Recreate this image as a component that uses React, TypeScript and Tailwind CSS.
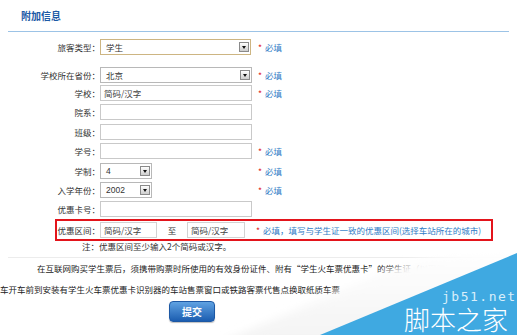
import React from "react";

function Arrow() {
  return (
    <div className="w-[10px] h-[10px] border border-[#8a8a8a] bg-linear-to-b from-white to-[#cdcdcd] flex items-center justify-center shrink-0">
      <div className="w-0 h-0 border-l-[2.5px] border-r-[2.5px] border-t-[3px] border-l-transparent border-r-transparent border-t-[#111]" />
    </div>
  );
}

function Req() {
  return (
    <>
      <span className="ml-[6px] text-[#e02424]">*</span>
      <span className="ml-[3px] text-[#2f7cc6]">必填</span>
    </>
  );
}

function Row({
  label,
  children,
  req,
  mt,
}: {
  label: string;
  children: React.ReactNode;
  req?: boolean;
  mt: string;
}) {
  return (
    <div className={`flex items-center h-[16px] ${mt}`}>
      <div className="w-[100px] text-right whitespace-nowrap">{label}</div>
      <div className="w-[152px] h-[16px] flex">{children}</div>
      {req && <Req />}
    </div>
  );
}

function TextBox({ text }: { text?: string }) {
  return (
    <div className="w-[152px] h-[16px] border border-[#c9c9c9] bg-white flex items-center pl-[3px] text-[#444]">
      {text}
    </div>
  );
}

export default function App() {
  return (
    <div className="relative w-[517px] h-[335px] overflow-hidden bg-white text-[#333] text-[8.5px] leading-[12px] font-['Noto_Sans_CJK_SC','Noto_Sans',sans-serif]">
      <div className="h-[31px] flex items-center pl-[21px] text-[10px] font-bold text-[#1c5aa6]">
        附加信息
      </div>
      <div className="mx-[8px] border-t border-[#9cc3e6]" />

      <Row label="旅客类型：" req mt="mt-[7px]">
        <div className="w-[151px] h-[16px] border border-[#cdb582] bg-white flex items-center justify-between pl-[5px] pr-[1px]">
          <span>学生</span>
          <Arrow />
        </div>
      </Row>
      <Row label="学校所在省份：" req mt="mt-[12px]">
        <div className="w-[152px] h-[16px] border border-[#b8b8b8] bg-white flex items-center justify-between pl-[5px] pr-[1px]">
          <span>北京</span>
          <Arrow />
        </div>
      </Row>
      <Row label="学校：" req mt="mt-[2px]">
        <TextBox text="简码/汉字" />
      </Row>
      <Row label="院系：" mt="mt-[3px]">
        <TextBox />
      </Row>
      <Row label="班级：" mt="mt-[4px]">
        <TextBox />
      </Row>
      <Row label="学号：" req mt="mt-[3px]">
        <TextBox />
      </Row>
      <Row label="学制：" req mt="mt-[4px]">
        <div className="w-[52px] h-[16px] border border-[#b8b8b8] bg-white flex items-center justify-between pl-[5px] pr-[1px]">
          <span className="font-['Liberation_Sans',sans-serif]">4</span>
          <Arrow />
        </div>
      </Row>
      <Row label="入学年份：" req mt="mt-[3px]">
        <div className="w-[52px] h-[16px] border border-[#b8b8b8] bg-white flex items-center justify-between pl-[5px] pr-[1px]">
          <span className="font-['Liberation_Sans',sans-serif]">2002</span>
          <Arrow />
        </div>
      </Row>
      <Row label="优惠卡号：" mt="mt-[3px]">
        <TextBox />
      </Row>

      <div className="ml-[55px] mt-[2px] w-[438px] h-[22px] border-2 border-[#e3141b] flex items-center whitespace-nowrap">
        <div className="w-[43px] text-right">优惠区间：</div>
        <div className="w-[57px] h-[16px] border border-[#d2d2d2] flex items-center pl-[3px] text-[#444]">
          简码/汉字
        </div>
        <div className="w-[30px] text-center">至</div>
        <div className="w-[58px] h-[16px] border border-[#d2d2d2] flex items-center pl-[3px] text-[#444]">
          简码/汉字
        </div>
        <span className="ml-[11px] text-[#e02424]">*</span>
        <span className="ml-[3px] text-[#2f7cc6]">
          必填，填写与学生证一致的优惠区间(选择车站所在的城市)
        </span>
      </div>

      <div className="pl-[82px] h-[10px] leading-[10px] whitespace-nowrap">
        注：优惠区间至少输入2个简码或汉字。
      </div>
      <div className="mx-[8px] mt-[6px] border-t border-[#ececec]" />

      <div className="leading-[21px] whitespace-nowrap text-[#222]">
        <div className="pl-[37px]">
          在互联网购买学生票后，须携带购票时所使用的有效身份证件、附有“学生火车票优惠卡”的学生证（以下简称
        </div>
        <div>
          车开车前到安装有学生火车票优惠卡识别器的车站售票窗口或铁路客票代售点换取纸质车票
        </div>
      </div>

      <div className="ml-[169px] mt-[1px] w-[46px] h-[21px] rounded-[4px] border border-[#1d58a4] bg-linear-to-b from-[#5fa2e2] to-[#1b5db0] flex items-center justify-center text-white font-bold text-[10px] shadow-[0_1px_1px_rgba(0,0,0,0.25)]">
        提交
      </div>

      {/* watermark overlay */}
      <svg
        className="absolute inset-0 pointer-events-none"
        width="517"
        height="335"
        viewBox="0 0 517 335"
      >
        <defs>
          <filter id="blur" x="-20%" y="-20%" width="140%" height="140%">
            <feGaussianBlur stdDeviation="4" />
          </filter>
          <linearGradient id="sh" x1="0" y1="0" x2="0" y2="1">
            <stop offset="0" stopColor="#ffffff" />
            <stop offset="1" stopColor="#f3f3f3" />
          </linearGradient>
        </defs>
        <polygon
          points="214,345 380,274 425,258 470,251 530,249 530,345"
          fill="url(#sh)"
          filter="url(#blur)"
        />
        <polygon points="320,335 517,253 517,335" fill="#3fa9e1" />
      </svg>
      <div className="absolute left-[442px] top-[291px] text-[13px] leading-[12px] tracking-[1.5px] text-[#d9eefa] font-['DejaVu_Sans_Mono',monospace]">
        jb51.net
      </div>
      <div className="absolute left-[404px] top-[305px] text-[26px] leading-[28px] font-light text-white whitespace-nowrap font-['Noto_Sans_CJK_SC',sans-serif]">
        脚本之家
      </div>
    </div>
  );
}
